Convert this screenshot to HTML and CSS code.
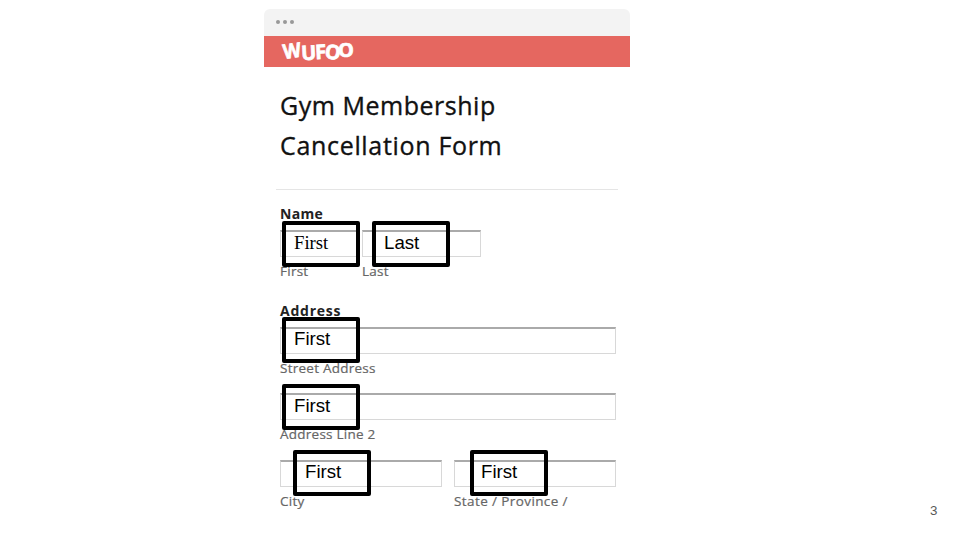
FILE: index.html
```html
<!DOCTYPE html>
<html lang="en">
<head>
<meta charset="utf-8">
<title>Gym Membership Cancellation Form</title>
<link rel="stylesheet" href="styles.css">
</head>
<body>
<main class="slide">
  <section class="window">
    <div class="window-bar"><i></i><i></i><i></i></div>
    <header class="brand"><span class="w">W</span><span class="u">U</span><span class="f">F</span><span class="o1">O</span><span class="o2">O</span></header>
    <div class="form">
      <h1><span class="title-one">Gym Membership</span><br><span class="title-two">Cancellation Form</span></h1>
      <div class="fields">
        <h2>Name</h2>
        <div class="row name-row">
          <div class="field first-name"><div class="input"><div class="mark serif">First</div></div><span class="caption">First</span></div>
          <div class="field last-name"><div class="input"><div class="mark">Last</div></div><span class="caption">Last</span></div>
        </div>
        <h2 class="address-title">Address</h2>
        <div class="row"><div class="field full"><div class="input"><div class="mark">First</div></div><span class="caption street">Street Address</span></div></div>
        <div class="row"><div class="field full"><div class="input"><div class="mark">First</div></div><span class="caption line-two">Address Line 2</span></div></div>
        <div class="row city-row">
          <div class="field half city"><div class="input"><div class="mark">First</div></div><span class="caption">City</span></div>
          <div class="field half state"><div class="input"><div class="mark">First</div></div><span class="caption province">State / Province /</span></div>
        </div>
      </div>
    </div>
  </section>
  <footer>3</footer>
</main>
</body>
</html>
```
FILE: styles.css
```css
* { box-sizing: border-box; }
body { margin: 0; background: #fff; font-family: "Open Sans", sans-serif; }
.slide { position: relative; width: 960px; height: 540px; overflow: hidden; padding: 9px 0 0 264px; }
.window { width: 366px; }
.window-bar { height: 27px; background: #f3f3f3; border-radius: 6px 6px 0 0; display: flex; gap: 3px; padding: 11px 0 0 12px; }
.window-bar i { width: 4px; height: 4px; border-radius: 50%; background: #999; }
.brand { height: 31px; background: #e56760; color: #fff; display: flex; padding: 1px 0 0 18px; font: 700 20px/27px "Open Sans", sans-serif; -webkit-text-stroke: .7px #fff; }
.brand span { display: block; height: 27px; }
.brand .w { width: 19px; transform: translate(1px, 1px) rotate(-8deg) scaleX(.93); transform-origin: left center; }
.brand .u { width: 14px; transform: translateY(2px) rotate(-3deg); }
.brand .f { width: 10px; transform: translateY(1px) rotate(-3deg); }
.brand .o1 { width: 14px; transform: translateY(1px) rotate(8deg); }
.brand .o2 { width: 16px; transform: translate(-1px, -1px); }
.form { padding: 18px 0 0 12px; }
h1 { width: 342px; height: 105px; margin: 0; padding-left: 4px; border-bottom: 1px solid #e5e5e5; font-size: 25px; line-height: 40px; font-weight: 400; color: #111; white-space: nowrap; -webkit-text-stroke: .35px #111; }
.title-one { letter-spacing: .52px; }
.title-two { letter-spacing: .68px; }
.fields { padding: 15px 0 0 4px; }
h2 { margin: 0; height: 25px; font-size: 14px; line-height: 18px; color: #222; letter-spacing: .3px; }
.address-title { margin-top: 5px; letter-spacing: .75px; }
.row { display: flex; height: 66.5px; }
.field { display: flex; flex-direction: column; }
.input { position: relative; height: 27px; background: #fff; border: 1px solid #d8d8d8; border-top: 2px solid #aaa; }
.first-name { width: 80px; margin-right: 2px; }
.last-name { width: 119px; }
.full { width: 336px; }
.half { width: 162px; }
.state { margin-left: 12px; }
.mark { position: absolute; z-index: 1; left: 1px; top: -11.5px; width: 78px; height: 46px; border: 4px solid #000; border-radius: 2px; padding-left: 8px; font: 18.67px/36px "Liberation Sans", sans-serif; color: #000; }
.last-name .mark { left: 9px; }
.city .mark { left: 12px; }
.state .mark { left: 15px; padding-left: 7px; }
.mark.serif { font-family: "Liberation Serif", serif; }
.caption { height: 20px; margin-top: 4px; font-size: 13.5px; line-height: 20px; color: #666; white-space: nowrap; letter-spacing: .25px; -webkit-text-stroke: .2px #666; }
.caption.province { letter-spacing: .4px; }
footer { position: absolute; left: 930px; top: 503px; font: 13.33px/16px "Liberation Sans", sans-serif; color: #595959; }
```
